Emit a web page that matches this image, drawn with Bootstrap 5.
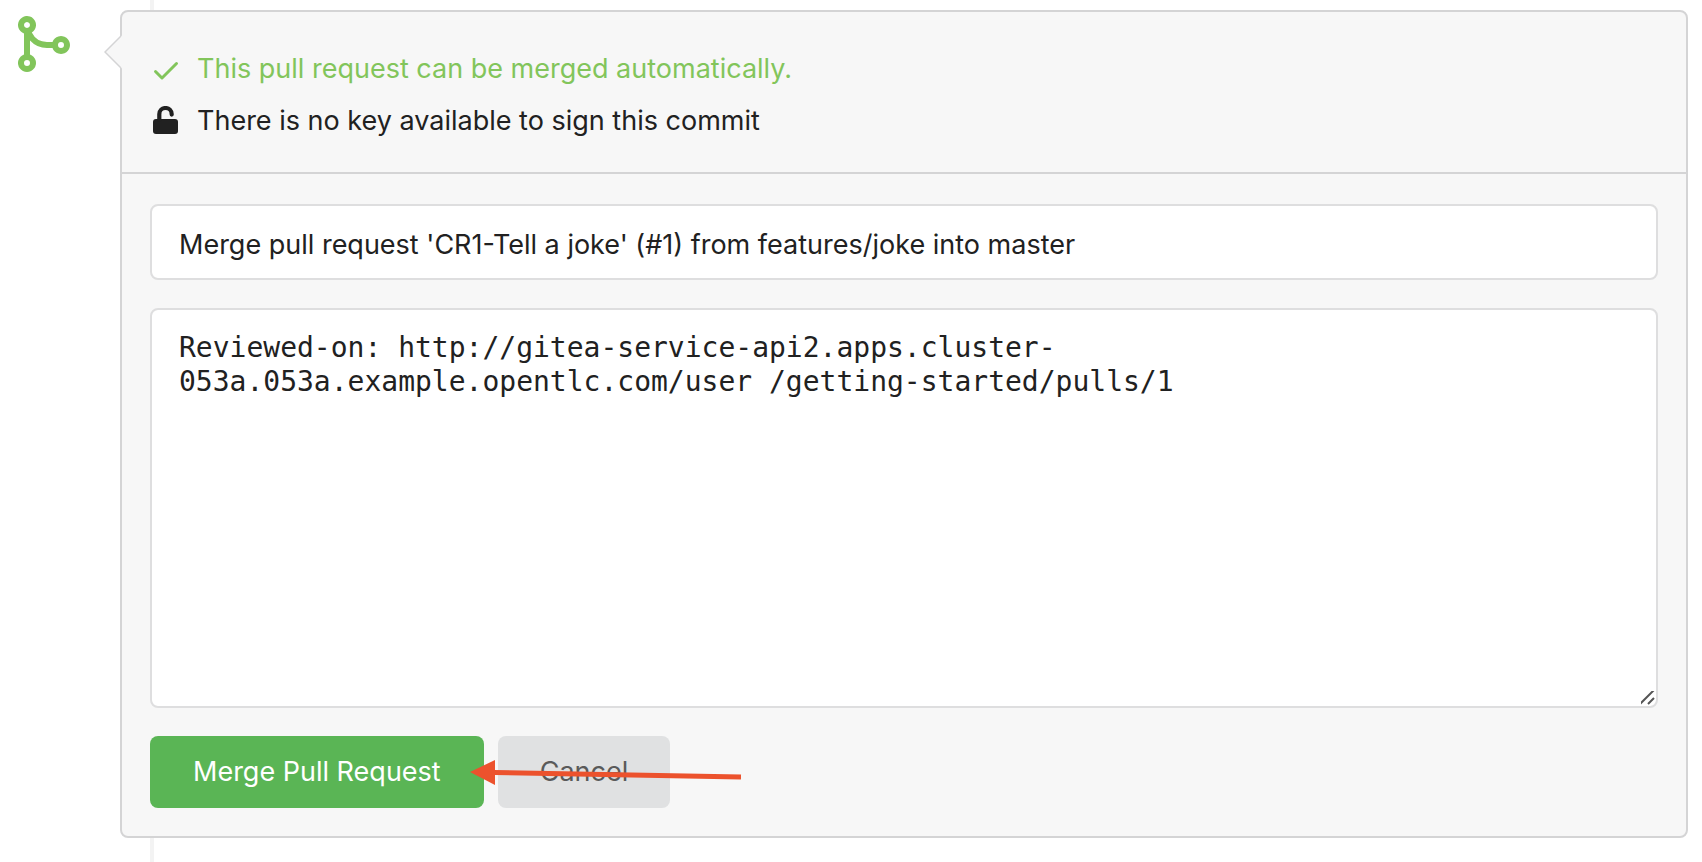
<!DOCTYPE html>
<html lang="en">
<head>
<meta charset="utf-8">
<meta name="viewport" content="width=device-width, initial-scale=1">
<title>Merge pull request</title>
<link href="https://cdn.jsdelivr.net/npm/bootstrap@5.3.0/dist/css/bootstrap.min.css" rel="stylesheet">
<style>
  body { font-family: Inter, "Liberation Sans", sans-serif; font-size: 27px; line-height: 36px; color: #212121; background: #fff; }
  .timeline { padding: 10px 14px 24px 0; min-height: 100vh; }
  .timeline::before { content: ""; position: absolute; top: 0; bottom: 0; left: 150px; width: 4px; background: #f3f3f3; }
  .timeline-icon { width: 120px; padding: 2px 0 0 10px; color: #82c55b; }
  .merge-box { background: #f7f7f7; border: 2px solid #d4d4d5; border-radius: 8px; }
  .pointer { left: -18px; top: 22px; }
  .merge-status { padding: 32px 28px 24px; border-bottom: 2px solid #d4d4d5; }
  .status-line { height: 52px; gap: 15px; }
  .status-line span { padding-bottom: 2px; }
  .status-ok { color: #82c55b; }
  .merge-form { padding: 30px 28px 28px; gap: 28px; }
  .merge-form .form-control { border: 2px solid #dededf; border-radius: 8px; padding: 21px 27px 15px; font-size: 27px; line-height: 36px; color: #212121; }
  .merge-form textarea.form-control { height: 400px; font: 28px/34px "DejaVu Sans Mono", monospace; }
  .merge-form textarea::-webkit-scrollbar { width: 18px; height: 18px; }
  .merge-form textarea::-webkit-resizer { background: url("data:image/svg+xml,%3Csvg xmlns='http://www.w3.org/2000/svg' width='18' height='18'%3E%3Cpath d='M2 16 16 2M10 16 16 10' stroke='%23555' stroke-width='2'/%3E%3C/svg%3E") no-repeat right bottom; }
  .action-row { gap: 14px; }
  .action-row .btn { height: 72px; border: 0; border-radius: 8px; padding: 0 42px; font-size: 27px; line-height: 36px; }
  .action-row .btn-merge { padding: 0 43px; }
  .btn-merge, .btn-merge:hover { background: #5ab555; color: #fff; }
  .btn-plain, .btn-plain:hover { background: #e0e1e2; color: #5a5a5a; }
  .arrow-mark { left: 320px; top: 24px; pointer-events: none; }
</style>
</head>
<body>
<main class="timeline position-relative d-flex align-items-start">
  <div class="timeline-icon flex-shrink-0">
    <svg class="d-block" width="64" height="64" viewBox="0 0 16 16" fill="currentColor" aria-hidden="true"><path fill-rule="evenodd" d="M5 3.254V3.25v.005a.75.75 0 110-.005v.004zm.45 1.9a2.25 2.25 0 10-1.95.218v5.256a2.25 2.25 0 101.5 0V7.123A5.735 5.735 0 009.25 9h1.378a2.25 2.25 0 100-1.5H9.25a4.25 4.25 0 01-3.8-2.346zM12.75 9a.75.75 0 100-1.5.75.75 0 000 1.5zm-8.5 4.5a.75.75 0 100-1.5.75.75 0 000 1.5z"/></svg>
  </div>
  <section class="merge-box position-relative flex-grow-1">
    <svg class="pointer position-absolute" width="20" height="36" viewBox="0 0 20 36" aria-hidden="true"><path d="M20 1 17 2 1 18 17 34 20 35z" fill="#f7f7f7"/><path d="M17 2 1 18 17 34" fill="none" stroke="#d4d4d5" stroke-width="1.5"/></svg>
    <div class="merge-status">
      <div class="status-line status-ok d-flex align-items-center">
        <svg class="flex-shrink-0" width="32" height="32" viewBox="0 0 16 16" fill="currentColor" aria-hidden="true"><path d="M13.780 4.220a.75.75 0 010 1.060l-7.250 7.250a.75.75 0 01-1.060 0L2.220 9.280a.75.75 0 011.060-1.060L6 10.940l6.720-6.720a.75.75 0 011.060 0z"/></svg>
        <span>This pull request can be merged automatically.</span>
      </div>
      <div class="status-line d-flex align-items-center">
        <svg class="flex-shrink-0" width="32" height="32" viewBox="0 0 32 32" aria-hidden="true"><rect x="3" y="13" width="25" height="15" rx="3" fill="#212121"/><path d="M9.300 14V8.200a6.200 6.200 0 0112.400 0V8.600" fill="none" stroke="#212121" stroke-width="4.200" stroke-linecap="round"/></svg>
        <span>There is no key available to sign this commit</span>
      </div>
    </div>
    <form class="merge-form d-flex flex-column" onsubmit="return false">
      <input class="form-control" type="text" aria-label="Merge title" value="Merge pull request 'CR1-Tell a joke' (#1) from features/joke into master">
      <textarea class="form-control" aria-label="Merge message" spellcheck="false">Reviewed-on: http://gitea-service-api2.apps.cluster-
053a.053a.example.opentlc.com/user /getting-started/pulls/1</textarea>
      <div class="action-row position-relative d-flex">
        <button type="submit" class="btn btn-merge">Merge Pull Request</button>
        <button type="button" class="btn btn-plain">Cancel</button>
        <svg class="arrow-mark position-absolute" width="272" height="26" viewBox="0 0 272 26" aria-hidden="true"><path d="M24 12.500 271 17" stroke="#ec522d" stroke-width="5" fill="none"/><path d="M0 12 25 0V25z" fill="#ec522d"/></svg>
      </div>
    </form>
  </section>
</main>
<script src="https://cdn.jsdelivr.net/npm/bootstrap@5.3.0/dist/js/bootstrap.bundle.min.js"></script>
</body>
</html>
